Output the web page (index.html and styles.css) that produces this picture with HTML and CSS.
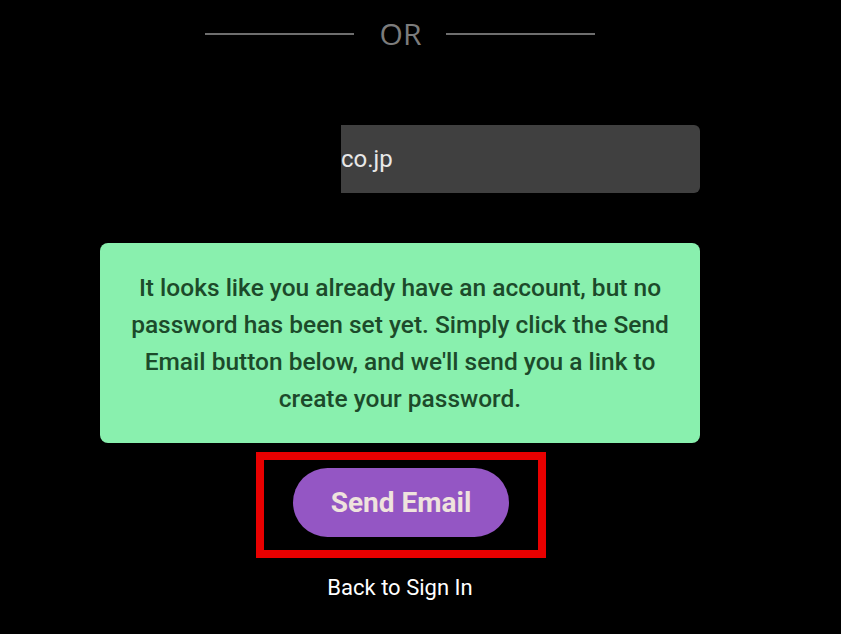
FILE: index.html
```html
<!DOCTYPE html>
<html>
<head>
<meta charset="utf-8">
<link rel="stylesheet" href="styles.css">
</head>
<body>
<div class="page">
  <div class="or-row">
    <span class="or-line"></span>
    <span class="or-text">OR</span>
    <span class="or-line"></span>
  </div>
  <div class="email-field">co.jp</div>
  <div class="notice">It looks like you already have an account, but no password has been set yet. Simply click the Send Email button below, and we'll send you a link to create your password.</div>
  <div class="highlight">
    <button class="send-btn">Send Email</button>
  </div>
  <a class="back-link">Back to Sign In</a>
</div>
</body>
</html>
```

FILE: styles.css
```css
html, body {
  margin: 0;
  padding: 0;
  background: #000;
}
body {
  width: 841px;
  height: 634px;
  overflow: hidden;
  font-family: Roboto, "Liberation Sans", sans-serif;
}
.page {
  width: 600px;
  margin-left: 100px;
  padding-top: 14px;
  display: flex;
  flex-direction: column;
}
.or-row {
  height: 40px;
  display: flex;
  align-items: center;
  justify-content: center;
}
.or-line {
  width: 149px;
  height: 2px;
  background: #6e6e6e;
}
.or-text {
  margin: 0 25px 0 26px;
  font-size: 30px;
  color: #7c7c7c;
  font-family: "Open Sans", Roboto, sans-serif;
  line-height: 40px;
}
.email-field {
  margin-top: 71px;
  margin-left: 241px;
  width: 359px;
  height: 68px;
  background: #404040;
  border-radius: 0 6px 6px 0;
  color: #e8e8e8;
  font-size: 24px;
  line-height: 68px;
  box-sizing: border-box;
}
.notice {
  margin-top: 50px;
  height: 200px;
  box-sizing: border-box;
  padding: 26px 18px;
  background: #89f0ae;
  border-radius: 8px;
  color: #1c4a2a;
  font-size: 24.5px;
  font-weight: 500;
  line-height: 37px;
  text-align: center;
}
.highlight {
  margin-top: 9px;
  align-self: center;
  margin-left: 2px;
  width: 290px;
  height: 106px;
  box-sizing: border-box;
  border: 8px solid #e80000;
  display: flex;
  justify-content: center;
  padding-top: 8px;
}
.send-btn {
  width: 216px;
  height: 69px;
  border: none;
  border-radius: 35px;
  background: #9456c4;
  color: #efe3dd;
  font-family: Roboto, sans-serif;
  font-weight: 700;
  font-size: 28px;
  padding: 0;
}
.back-link {
  margin-top: 15px;
  align-self: center;
  color: #fff;
  font-size: 22px;
  line-height: 30px;
}
```
